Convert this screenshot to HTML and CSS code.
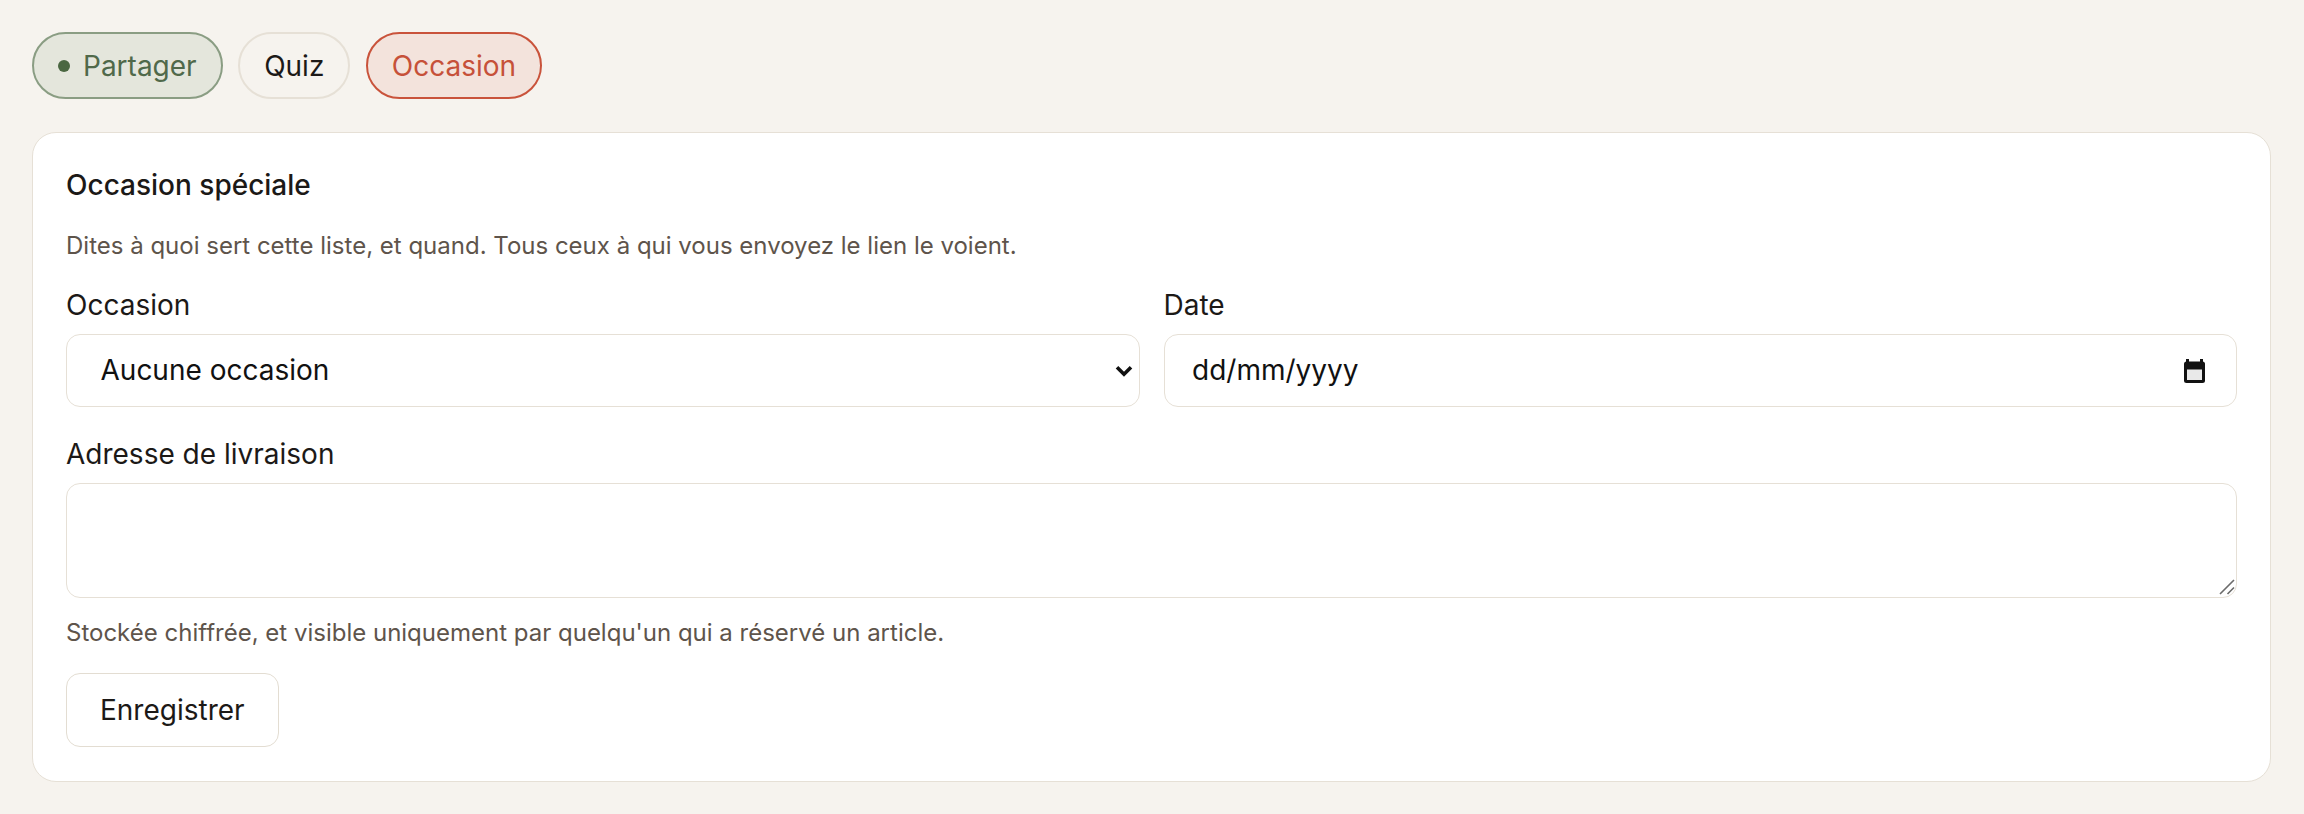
FILE: index.html
```html
<!DOCTYPE html>
<html lang="fr">
<head>
<meta charset="utf-8">
<title>Occasion spéciale</title>
<link rel="stylesheet" href="styles.css">
</head>
<body>
<div class="page">
  <nav class="tabs">
    <button class="pill pill-share" type="button"><span class="dot"></span>Partager</button>
    <button class="pill" type="button">Quiz</button>
    <button class="pill pill-occasion" type="button">Occasion</button>
  </nav>

  <section class="card">
    <h2 class="card-title">Occasion spéciale</h2>
    <p class="card-desc">Dites à quoi sert cette liste, et quand. Tous ceux à qui vous envoyez le lien le voient.</p>

    <div class="row">
      <div class="field">
        <label class="label" for="occ">Occasion</label>
        <div class="control-wrap">
          <select id="occ" class="control select">
            <option>Aucune occasion</option>
            <option>Anniversaire</option>
            <option>Mariage</option>
            <option>Noël</option>
          </select>
          <svg class="chevron" width="18" height="12" viewBox="0 0 18 12" aria-hidden="true"><path d="M2 2.2 L9 9.2 L16 2.2" fill="none" stroke="#111" stroke-width="3.6"/></svg>
        </div>
      </div>
      <div class="field">
        <label class="label" for="date">Date</label>
        <div class="control-wrap">
          <input id="date" class="control date" type="text" placeholder="dd/mm/yyyy">
          <svg class="calendar" width="21" height="24" viewBox="0 0 21 24" aria-hidden="true">
            <rect x="2" y="0" width="3" height="4" fill="#111"/>
            <rect x="16" y="0" width="3" height="4" fill="#111"/>
            <rect x="0" y="2.5" width="21" height="21.5" rx="2.5" fill="#111"/>
            <rect x="3" y="10.5" width="15" height="10.5" fill="#e9e9e9"/>
          </svg>
        </div>
      </div>
    </div>

    <div class="field">
      <label class="label" for="addr">Adresse de livraison</label>
      <div class="control-wrap">
        <textarea id="addr" class="control textarea"></textarea>
        <svg class="grip" width="16" height="16" viewBox="0 0 16 16" aria-hidden="true"><path d="M1 15 L15 1 M8.5 15 L15 8.5" stroke="#6b6b6b" stroke-width="1.6" fill="none"/></svg>
      </div>
    </div>
    <p class="hint">Stockée chiffrée, et visible uniquement par quelqu'un qui a réservé un article.</p>

    <button class="btn" type="button">Enregistrer</button>
  </section>
</div>
</body>
</html>
```

FILE: styles.css
```css
* { box-sizing: border-box; }

html, body {
  margin: 0;
  padding: 0;
  background: #f6f3ee;
}

body {
  font-family: Inter, "Noto Sans", "Liberation Sans", sans-serif;
  color: #1c1917;
  font-size: 28px;
  line-height: 42px;
}

.page {
  padding: 32px 33px 32px 32px;
}

.tabs {
  display: flex;
  gap: 15.5px;
  margin-bottom: 33px;
}

.pill {
  display: inline-flex;
  align-items: center;
  gap: 13px;
  height: 67px;
  padding: 0 24px;
  border-radius: 999px;
  border: 2px solid #e6e0d6;
  background: #f6f3ee;
  color: #1c1917;
  font-family: inherit;
  font-size: 28px;
  line-height: 42px;
  cursor: pointer;
}

.pill-share {
  background: #e4e6dc;
  border-color: #8a9d83;
  color: #50694a;
}

.dot {
  width: 12px;
  height: 12px;
  border-radius: 50%;
  background: #4a6741;
}

.pill-occasion {
  background: #f3e3dc;
  border-color: #c9533b;
  color: #c65139;
}

.card {
  background: #ffffff;
  border: 1.5px solid #e6e0d6;
  border-radius: 24px;
  padding: 31px 33px 34px 33px;
}

.card-title {
  margin: 0 0 22px;
  font-size: 28px;
  line-height: 42px;
  font-weight: 500;
  color: #1c1917;
}

.card-desc,
.hint {
  margin: 0;
  font-size: 24px;
  line-height: 36px;
  color: #5e544b;
}

.card-desc { margin-bottom: 20px; }

.row {
  display: grid;
  grid-template-columns: 1fr 1fr;
  gap: 24px;
  margin-bottom: 26.5px;
}

.field {
  display: flex;
  flex-direction: column;
  min-width: 0;
}

.label {
  display: block;
  font-size: 28px;
  line-height: 42px;
  margin-bottom: 7.5px;
  color: #1c1917;
}

.control-wrap {
  position: relative;
}

.control {
  display: block;
  width: 100%;
  border: 1.5px solid #e6e0d6;
  border-radius: 14px;
  background: #ffffff;
  font-family: inherit;
  font-size: 28px;
  color: #111111;
  outline: none;
}

.select {
  height: 73px;
  padding: 0 48px 0 33.5px;
  appearance: none;
  -webkit-appearance: none;
}

.date {
  height: 73px;
  padding: 0 60px 0 27.5px;
}

.date::placeholder {
  color: #111111;
  opacity: 1;
}

.chevron {
  position: absolute;
  right: 7px;
  top: 31px;
  pointer-events: none;
}

.calendar {
  position: absolute;
  right: 32px;
  top: 25px;
  pointer-events: none;
}

.textarea {
  height: 115px;
  resize: none;
  padding: 12px 24px;
  line-height: 42px;
}

.grip {
  position: absolute;
  right: 2px;
  bottom: 3px;
  pointer-events: none;
}

.hint {
  margin-top: 17px;
  margin-bottom: 22px;
}

.btn {
  display: inline-flex;
  align-items: center;
  height: 74px;
  padding: 0 33px;
  border: 1.5px solid #e3ddd2;
  border-radius: 14px;
  background: #ffffff;
  color: #1c1917;
  font-family: inherit;
  font-size: 28px;
  line-height: 42px;
  cursor: pointer;
}
```
